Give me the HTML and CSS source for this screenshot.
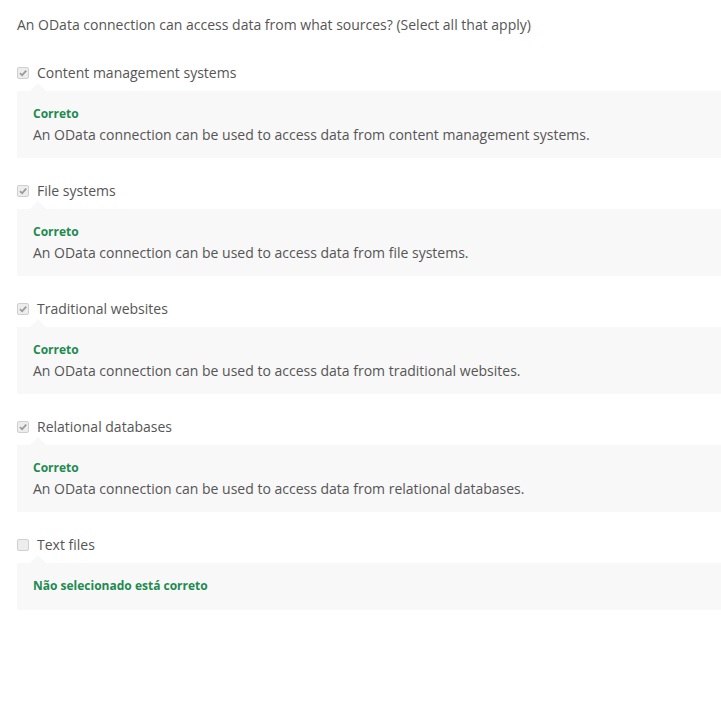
FILE: index.html
```html
<!DOCTYPE html>
<html>
<head>
<meta charset="utf-8">
<link rel="stylesheet" href="styles.css">
</head>
<body>
<div class="quiz">
  <p class="question">An OData connection can access data from what sources? (Select all that apply)</p>
  <div class="options">
    <div class="option">
      <div class="choice"><span class="box"><svg viewBox="0 0 12 12" width="12" height="12"><path d="M3 6.2 L5.1 8.3 L9.2 3.6" fill="none" stroke="#9a9a9a" stroke-width="1.8"/></svg></span><span>Content management systems</span></div>
      <div class="feedback">
        <div class="verdict">Correto</div>
        <div class="explain">An OData connection can be used to access data from content management systems.</div>
      </div>
    </div>
    <div class="option">
      <div class="choice"><span class="box"><svg viewBox="0 0 12 12" width="12" height="12"><path d="M3 6.2 L5.1 8.3 L9.2 3.6" fill="none" stroke="#9a9a9a" stroke-width="1.8"/></svg></span><span>File systems</span></div>
      <div class="feedback">
        <div class="verdict">Correto</div>
        <div class="explain">An OData connection can be used to access data from file systems.</div>
      </div>
    </div>
    <div class="option">
      <div class="choice"><span class="box"><svg viewBox="0 0 12 12" width="12" height="12"><path d="M3 6.2 L5.1 8.3 L9.2 3.6" fill="none" stroke="#9a9a9a" stroke-width="1.8"/></svg></span><span>Traditional websites</span></div>
      <div class="feedback">
        <div class="verdict">Correto</div>
        <div class="explain">An OData connection can be used to access data from traditional websites.</div>
      </div>
    </div>
    <div class="option">
      <div class="choice"><span class="box"><svg viewBox="0 0 12 12" width="12" height="12"><path d="M3 6.2 L5.1 8.3 L9.2 3.6" fill="none" stroke="#9a9a9a" stroke-width="1.8"/></svg></span><span>Relational databases</span></div>
      <div class="feedback">
        <div class="verdict">Correto</div>
        <div class="explain">An OData connection can be used to access data from relational databases.</div>
      </div>
    </div>
    <div class="option">
      <div class="choice"><span class="box"></span><span>Text files</span></div>
      <div class="feedback short">
        <div class="verdict">Não selecionado está correto</div>
      </div>
    </div>
  </div>
</div>
</body>
</html>
```
FILE: styles.css
```css
html, body {
  margin: 0;
  padding: 0;
  background: #ffffff;
}
body {
  font-family: "Open Sans", "Liberation Sans", sans-serif;
  font-size: 14px;
  color: #555555;
}
.quiz {
  padding: 15px 0 0 17px;
}
.question {
  margin: 0 0 28px 0;
  line-height: 20px;
}
.options {
  display: flex;
  flex-direction: column;
  gap: 23px;
}
.choice {
  display: flex;
  align-items: center;
  gap: 8px;
  height: 20px;
  line-height: 20px;
}
.box {
  box-sizing: border-box;
  width: 12px;
  height: 12px;
  border: 1px solid #cfcfcf;
  border-radius: 2px;
  background: #ededed;
  position: relative;
  flex: none;
}
.box svg {
  position: absolute;
  left: -1px;
  top: -1px;
}
.feedback {
  position: relative;
  margin-top: 8px;
  background: #f8f8f8;
  padding: 13px 16px 13px 16px;
}
.feedback::before {
  content: "";
  position: absolute;
  top: -8px;
  left: 13px;
  border-left: 8px solid transparent;
  border-right: 8px solid transparent;
  border-bottom: 8px solid #f8f8f8;
}
.feedback.short {
  padding-bottom: 14px;
}
.verdict {
  font-size: 12px;
  font-weight: bold;
  color: #218a4f;
  line-height: 20px;
  margin-bottom: 1px;
}
.short .verdict {
  margin-bottom: 0;
}
.explain {
  line-height: 20px;
}
```
